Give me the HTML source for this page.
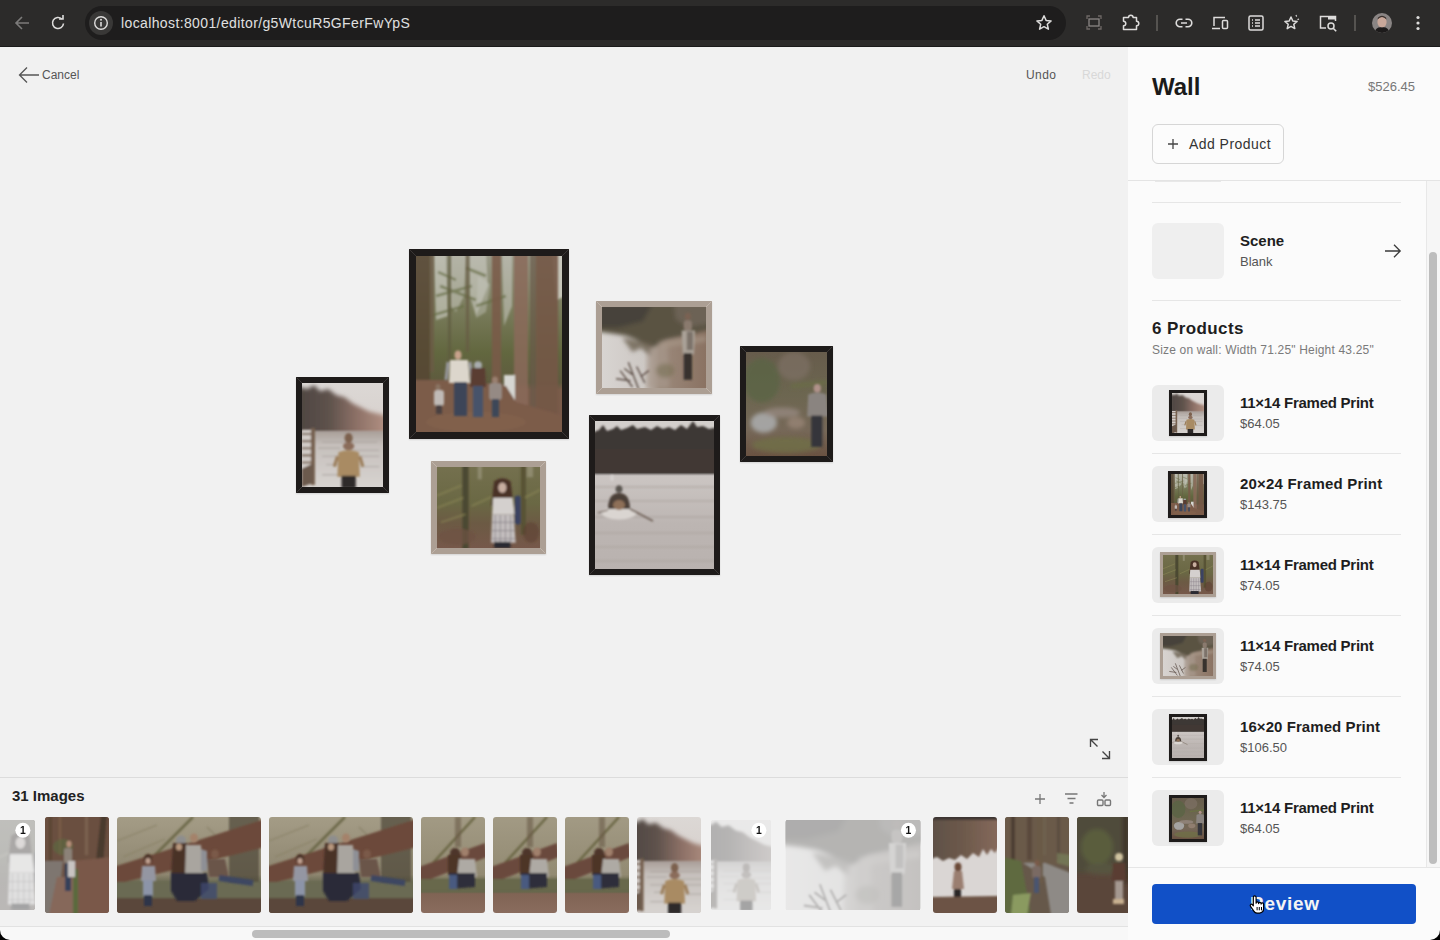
<!DOCTYPE html>
<html><head><meta charset="utf-8"><style>
*{box-sizing:border-box;margin:0;padding:0}
html,body{width:1440px;height:940px;overflow:hidden;background:#000}
body{position:relative;font-family:"Liberation Sans",sans-serif;}
.abs{position:absolute}
svg.abs{overflow:visible}
#tb{left:0;top:0;width:1440px;height:47px;background:#2c2b2a;border-bottom:1px solid #1b1b1b}
#url{left:85px;top:6px;width:981px;height:34px;border-radius:17px;background:#1e1d1d}
#urltxt{left:121px;top:16px;font-size:14px;color:#e0e0e0;letter-spacing:0.38px;white-space:nowrap}
#canvas{left:0;top:47px;width:1128px;height:730px;background:#f1f1f1}
#film{left:0;top:777px;width:1128px;height:163px;background:#f2f2f2;border-top:1px solid #dcdcdc;overflow:hidden}
#panel{left:1128px;top:47px;width:312px;height:893px;background:#fbfbfb}
.t{position:absolute;white-space:nowrap;line-height:1}
.frame{position:absolute;background:#1e1b1a;box-shadow:0 1px 1.5px rgba(0,0,0,.12)}
.frame.wood{background:#ac9f94}
.frame svg{position:absolute}
.th{position:absolute;top:39px;height:96px;border-radius:3px;overflow:hidden}
.th svg{position:absolute;left:0;top:0}
.fade{position:absolute;left:0;top:0;right:0;bottom:0;background:rgba(245,245,245,.6)}
.th.f svg{filter:grayscale(.75)}
.badge{position:absolute;top:3px;right:5px;width:16px;height:16px;border-radius:8px;background:#fff;font-size:11px;font-weight:bold;color:#111;text-align:center;line-height:16px}
.sep{position:absolute;left:1152px;width:249px;height:1px;background:#e6e6e6}
</style></head>
<body>
<svg width="0" height="0" style="position:absolute">
<defs>
<filter id="bl1" x="-20%" y="-20%" width="140%" height="140%"><feGaussianBlur stdDeviation="1"/></filter>
<filter id="bl2" x="-20%" y="-20%" width="140%" height="140%"><feGaussianBlur stdDeviation="2"/></filter>
<filter id="bl3" x="-20%" y="-20%" width="140%" height="140%"><feGaussianBlur stdDeviation="3"/></filter>

<!-- A: misty lake, kid on shoulders -->
<linearGradient id="gA1" x1="0" y1="0" x2="1" y2="0"><stop offset="0" stop-color="#4e4641"/><stop offset=".35" stop-color="#5e524c"/><stop offset=".65" stop-color="#8c7066"/><stop offset="1" stop-color="#b39284"/></linearGradient>
<linearGradient id="gA2" x1="0" y1="0" x2="0" y2="1"><stop offset="0" stop-color="#a89e98"/><stop offset=".25" stop-color="#c6c0bc"/><stop offset="1" stop-color="#d8d4d1"/></linearGradient>
<linearGradient id="gA3" x1="0" y1="0" x2="0" y2="1"><stop offset="0" stop-color="#dcd8d5"/><stop offset=".5" stop-color="#d6cfcb"/><stop offset="1" stop-color="#cbbdb6"/></linearGradient>
<symbol id="pA" viewBox="0 0 80 102" preserveAspectRatio="xMidYMid slice">
<rect width="80" height="102" fill="url(#gA3)"/>
<g filter="url(#bl2)">
<path d="M-4 4 L6 6 L12 2 L18 8 L26 6 L34 12 L42 14 L50 20 L58 24 L66 28 L74 30 L84 32 L84 50 L-4 50 Z" fill="url(#gA1)"/>
</g>
<g filter="url(#bl1)">
<rect x="-2" y="47" width="84" height="57" fill="url(#gA2)"/>
<path d="M20 58 h54 M16 64 h22 M44 66 h32 M20 72 h56 M24 80 h20 M58 82 h18 M20 90 h24" stroke="#a49d98" stroke-width="1.3" opacity=".6"/>
</g>
<g filter="url(#bl1)">
<rect x="0" y="46" width="12" height="50" fill="#d2ccc8"/>
<path d="M0 50h11M0 57h11M0 64h11M0 71h11M0 78h11" stroke="#7e6a5c" stroke-width="2"/>
<rect x="9" y="44" width="4" height="56" fill="#76614f"/>
<path d="M0 84 L11 79 L11 98 L0 102Z" fill="#6c5a4e"/>
</g>
<g filter="url(#bl1)">
<ellipse cx="46" cy="54" rx="4" ry="5" fill="#7c604e"/>
<ellipse cx="46" cy="62" rx="5.5" ry="4" fill="#8a6c5a"/>
<path d="M36 68 Q46 64 56 68 L57 92 L35 92 Z" fill="#a98b63"/>
<path d="M35 72 L32 82 M57 72 L60 82" stroke="#9a7c58" stroke-width="3"/>
<rect x="39" y="91" width="14" height="12" fill="#2e2a2a"/>
</g>
</symbol>

<!-- B: forest path family -->
<linearGradient id="gB1" x1="0" y1="0" x2="0" y2="1"><stop offset="0" stop-color="#9a9a88"/><stop offset=".3" stop-color="#7a7c5c"/><stop offset=".55" stop-color="#62673f"/><stop offset=".72" stop-color="#5e5a3e"/><stop offset=".76" stop-color="#7a5c4a"/><stop offset="1" stop-color="#7a5a4a"/></linearGradient>
<symbol id="pB" viewBox="0 0 146 176" preserveAspectRatio="xMidYMid slice">
<rect width="146" height="176" fill="url(#gB1)"/>
<g filter="url(#bl1)">
<path d="M18 -4 L30 -4 L32 60 L20 64Z" fill="#d2d2ca" opacity=".6"/>
<path d="M34 -4 L50 -4 L48 40 L40 56 L34 50Z" fill="#c8c8be" opacity=".55"/>
<path d="M54 -4 L70 -4 L72 30 L60 60 L54 40Z" fill="#cfcfc6" opacity=".6"/>
<path d="M62 20 L74 28 L70 56 L60 62Z" fill="#c4c6bb" opacity=".45"/>
<path d="M86 -4 L96 -4 L96 50 L88 70Z" fill="#cbcbc2" opacity=".55"/>
<path d="M136 -4 L150 -4 L150 40 L140 44Z" fill="#d6d4cc" opacity=".8"/>
<path d="M20 40 L56 30 M14 60 L48 50 M60 50 L90 40 M22 16 L40 24 M50 12 L70 20 M24 30 L60 44" stroke="#6a7048" stroke-width="3" opacity=".7"/>
</g>
<g filter="url(#bl1)">
<rect x="-4" y="-4" width="18" height="150" fill="#564434" opacity=".85"/>
<rect x="14" y="-4" width="4" height="120" fill="#6a5a44" opacity=".8"/>
<rect x="32" y="-4" width="3" height="110" fill="#5e5a40" opacity=".7"/>
<rect x="50" y="-4" width="3" height="100" fill="#665a44" opacity=".7"/>
<rect x="76" y="-4" width="9" height="150" fill="#7a5a48" opacity=".85"/>
<rect x="98" y="-4" width="14" height="176" fill="#8a6a5a" opacity=".85"/>
<rect x="114" y="-4" width="6" height="176" fill="#6a5848" opacity=".7"/>
<rect x="120" y="-4" width="22" height="180" fill="#735646" opacity=".9"/>
<rect x="88" y="119" width="11" height="26" fill="#d6d6d2"/>
<path d="M-4 124 L40 124 L90 130 L100 146 L150 160 L150 180 L-4 180Z" fill="#7b5b4a"/>
<ellipse cx="60" cy="166" rx="50" ry="10" fill="#86654f" opacity=".6"/>
</g>
<g filter="url(#bl1)">
<ellipse cx="42" cy="99" rx="3.5" ry="4.5" fill="#c8a28c"/>
<path d="M34 104 L52 104 L54 127 L33 127Z" fill="#dcd6cc"/>
<path d="M32 106 L30 124 M54 106 L56 124" stroke="#9a9aa0" stroke-width="3"/>
<rect x="38" y="126" width="13" height="34" fill="#3c4558"/>
<ellipse cx="62" cy="109" rx="4" ry="3.8" fill="#a8acae"/>
<path d="M55 112 L69 112 L70 131 L54 131Z" fill="#5a3e32"/>
<rect x="57" y="130" width="10" height="31" fill="#46536a"/>
<ellipse cx="79" cy="124" rx="3" ry="3.5" fill="#9a8070"/>
<rect x="73" y="127" width="13" height="17" rx="3" fill="#958a84"/>
<rect x="76" y="143" width="7" height="18" fill="#3e4658"/>
<ellipse cx="22" cy="131" rx="2.5" ry="3" fill="#8a7464"/>
<rect x="18" y="134" width="10" height="16" rx="3" fill="#c0bab6"/>
<rect x="20" y="149" width="6" height="9" fill="#4a4040"/>
</g>
</symbol>

<!-- C: lake shore, people on right -->
<linearGradient id="gC1" x1="0" y1="0" x2="1" y2="0"><stop offset="0" stop-color="#d8d4d1"/><stop offset=".4" stop-color="#cdc8c4"/><stop offset=".55" stop-color="#9c8a7c"/><stop offset="1" stop-color="#8a7262"/></linearGradient>
<symbol id="pC" viewBox="0 0 102 79" preserveAspectRatio="xMidYMid slice">
<rect width="102" height="79" fill="url(#gC1)"/>
<g filter="url(#bl2)">
<path d="M-4 -4 H106 V22 L80 28 L62 32 L50 40 L42 36 L34 32 L24 28 L12 26 L-4 24Z" fill="#5a5343"/>
<path d="M-4 -4 H50 L40 14 L16 20 L-4 20Z" fill="#46423a"/>
<path d="M70 -4 H106 V16 L84 20 L72 12Z" fill="#6c6254"/>
<path d="M20 30 L30 44 L38 40 L48 48 L50 36Z" fill="#6a6050" opacity=".8"/>
<path d="M46 40 L64 36 L66 79 L44 79Z" fill="#a89a8e" opacity=".6"/>
<ellipse cx="62" cy="62" rx="9" ry="7" fill="#756e50" opacity=".55"/>
<path d="M55 34 L102 28 L102 34 L58 40Z" fill="#a89888" opacity=".6"/>
</g>
<g filter="url(#bl1)">
<path d="M18 62 L30 78 M26 54 L36 80 M14 70 L28 72 M34 58 L42 74 M30 66 L22 60 M38 68 L46 62" stroke="#5e5048" stroke-width="1.4"/>
</g>
<g filter="url(#bl1)">
<ellipse cx="84" cy="9" rx="3" ry="3.5" fill="#7a6252"/>
<rect x="80" y="13" width="8" height="10" rx="3" fill="#8a7a6e"/>
<path d="M78 23 L91 23 L90 46 L79 46Z" fill="#aaa298"/>
<rect x="83" y="24" width="6" height="18" fill="#6a6058" opacity=".7"/>
<rect x="80" y="45" width="8" height="26" fill="#38322e"/>
</g>
</symbol>

<!-- D: girl in plaid dress, forest -->
<linearGradient id="gD1" x1="0" y1="0" x2="0" y2="1"><stop offset="0" stop-color="#74704e"/><stop offset=".45" stop-color="#6a6844"/><stop offset=".7" stop-color="#6c5a44"/><stop offset="1" stop-color="#76584a"/></linearGradient>
<symbol id="pD" viewBox="0 0 101 79" preserveAspectRatio="xMidYMid slice">
<rect width="101" height="79" fill="url(#gD1)"/>
<g filter="url(#bl1)">
<rect x="25" y="-4" width="6" height="86" fill="#4c4830"/>
<rect x="82" y="-4" width="5" height="70" fill="#585234"/>
<rect x="40" y="-4" width="4" height="16" fill="#aaa690" opacity=".5"/>
<rect x="88" y="-4" width="6" height="14" fill="#aaa690" opacity=".5"/>
<path d="M0 28 L24 18 M0 40 L26 30 M34 38 L56 28 M4 54 L28 46 M86 30 L101 22" stroke="#8a8656" stroke-width="2" opacity=".6"/>
<ellipse cx="20" cy="68" rx="18" ry="8" fill="#6e5244" opacity=".7"/>
<ellipse cx="92" cy="64" rx="8" ry="10" fill="#5e4034" opacity=".6"/>
</g>
<g filter="url(#bl1)">
<path d="M56 14 Q64 8 72 14 L75 38 L53 38Z" fill="#4a3026"/>
<ellipse cx="64" cy="20" rx="4" ry="5" fill="#c8aea0"/>
<path d="M55 30 L74 30 L76 46 L54 46Z" fill="#d4d0ce"/>
<path d="M54 46 L75 46 L77 74 L53 74Z" fill="#c4bfbf"/>
<path d="M57 47v26M62 47v26M67 47v26M72 47v26M54 54h22M54 62h22M54 70h22" stroke="#847e84" stroke-width=".8"/>
<rect x="76" y="28" width="6" height="28" rx="2" fill="#3a4262"/>
<rect x="56" y="73" width="16" height="6" fill="#2a2a30"/>
</g>
</symbol>

<!-- E: rowing boat on lake -->
<linearGradient id="gE1" x1="0" y1="0" x2="0" y2="1"><stop offset="0" stop-color="#ccc7c4"/><stop offset=".4" stop-color="#cac4c1"/><stop offset=".7" stop-color="#bcb5b2"/><stop offset="1" stop-color="#b9b2af"/></linearGradient>
<symbol id="pE" viewBox="0 0 119 148" preserveAspectRatio="xMidYMid slice">
<rect width="119" height="148" fill="url(#gE1)"/>
<rect width="119" height="12" fill="#d3cfcc"/>
<g filter="url(#bl1)">
<path d="M-4 12 L4 9 L8 4 L12 10 L18 8 L22 5 L26 9 L32 7 L38 4 L42 8 L50 6 L56 9 L62 5 L68 8 L74 6 L80 9 L86 4 L92 8 L98 0 L102 6 L108 5 L114 8 L123 6 L123 53 L-4 53Z" fill="#3e3834"/>
</g>
<rect x="0" y="28" width="119" height="24" fill="#433935" opacity=".7"/>
<g filter="url(#bl1)">
<path d="M-4 66h127M-4 80h127M-4 96h127M-4 112h127M-4 126h127M-4 140h127" stroke="#a9a29e" stroke-width="2" opacity=".5"/>
<ellipse cx="24" cy="92" rx="17" ry="6.5" fill="#dad5d1"/>
<ellipse cx="24" cy="68" rx="3.5" ry="3.8" fill="#5a5450"/>
<path d="M13 88 Q13 72 24 72 Q35 72 35 88Z" fill="#4c4038"/>
<ellipse cx="24" cy="84" rx="6" ry="5" fill="#8e7058"/>
<path d="M35 88 L58 100" stroke="#6a5a50" stroke-width="1.6"/>
<path d="M13 89 L3 92" stroke="#6a5a50" stroke-width="1.3"/>
<ellipse cx="17" cy="57" rx="1.5" ry="3" fill="#d8d4d2"/>
</g>
</symbol>

<!-- F: boy in forest -->
<linearGradient id="gF1" x1="0" y1="0" x2="0" y2="1"><stop offset="0" stop-color="#675c4c"/><stop offset=".4" stop-color="#6c6650"/><stop offset=".75" stop-color="#766858"/><stop offset="1" stop-color="#6a5242"/></linearGradient>
<symbol id="pF" viewBox="0 0 81 103" preserveAspectRatio="xMidYMid slice">
<rect width="81" height="103" fill="url(#gF1)"/>
<g filter="url(#bl2)">
<ellipse cx="16" cy="28" rx="18" ry="22" fill="#5a6444" opacity=".8"/>
<ellipse cx="48" cy="14" rx="16" ry="14" fill="#7e7064" opacity=".7"/>
<ellipse cx="18" cy="70" rx="13" ry="10" fill="#a8aaaa" opacity=".9"/>
<ellipse cx="36" cy="60" rx="18" ry="5" fill="#9a8c84" opacity=".7"/>
<ellipse cx="40" cy="92" rx="34" ry="8" fill="#707048" opacity=".8"/>
<ellipse cx="50" cy="70" rx="9" ry="6" fill="#a48e80" opacity=".6"/>
<path d="M45 34 L81 30" stroke="#6a7044" stroke-width="3"/>
</g>
<g filter="url(#bl1)">
<ellipse cx="71" cy="36" rx="3.6" ry="4.2" fill="#b0928a"/>
<path d="M62 42 Q71 38 80 42 L82 64 L61 64Z" fill="#8a8480"/>
<rect x="65" y="63" width="11" height="31" fill="#36363a"/>
</g>
</symbol>

<!-- G: family on log (wide) -->
<linearGradient id="gG1" x1="0" y1="0" x2="0" y2="1"><stop offset="0" stop-color="#a49c86"/><stop offset=".6" stop-color="#8e8670"/><stop offset=".68" stop-color="#6a6a52"/><stop offset=".84" stop-color="#626048"/><stop offset=".87" stop-color="#5a4a3e"/><stop offset="1" stop-color="#604c3e"/></linearGradient>
<symbol id="pG" viewBox="0 0 144 96" preserveAspectRatio="xMidYMid slice">
<rect width="144" height="96" fill="url(#gG1)"/>
<g filter="url(#bl1)">
<path d="M36 40 L76 0" stroke="#6a6848" stroke-width="2.5"/>
<path d="M0 24 L40 8 M6 40 L48 22 M90 10 L110 30" stroke="#8a8268" stroke-width="1.2"/>
<rect x="112" y="-4" width="30" height="72" fill="#4c4636" opacity=".7"/>
<path d="M-4 50 L148 2 L148 30 L-4 68Z" fill="#6c4a3a"/>
<rect x="-4" y="65" width="152" height="17" fill="#6a6a52"/>
<rect x="-4" y="81" width="152" height="19" fill="#5a463a"/>
</g>
<g filter="url(#bl1)">
<ellipse cx="31" cy="42" rx="4" ry="5" fill="#4a3228"/>
<ellipse cx="31" cy="44" rx="2.5" ry="3" fill="#c0a090"/>
<path d="M25 49 L38 49 L39 64 L24 64Z" fill="#9496a2"/>
<rect x="26" y="63" width="10" height="16" fill="#8c94a8"/>
<rect x="27" y="78" width="8" height="11" fill="#2e3648"/>
<ellipse cx="64" cy="23" rx="5" ry="4.5" fill="#8e8e8e"/>
<path d="M56 26 L70 26 L72 58 L54 58Z" fill="#4a3028"/>
<ellipse cx="62" cy="30" rx="3" ry="3.5" fill="#b8987e"/>
<ellipse cx="77" cy="21" rx="4" ry="4.5" fill="#a4826a"/>
<path d="M69 28 L84 28 L86 58 L68 58Z" fill="#a9a59f"/>
<path d="M84 32 L90 34 L90 54 L84 54Z" fill="#8e9096"/>
<path d="M54 56 L90 56 L92 72 L78 84 L60 84 L54 74Z" fill="#2c2c38"/>
<ellipse cx="98" cy="37" rx="4" ry="4.5" fill="#7a5a48"/>
<path d="M90 42 L108 42 L112 60 L92 60Z" fill="#6a5448"/>
<path d="M102 61 L136 66" stroke="#3e4662" stroke-width="6"/>
<rect x="84" y="66" width="16" height="16" fill="#404a6e" opacity=".8"/>
</g>
</symbol>

<!-- H: couple on log (portrait) -->
<linearGradient id="gH1" x1="0" y1="0" x2="0" y2="1"><stop offset="0" stop-color="#a29a84"/><stop offset=".6" stop-color="#928a72"/><stop offset=".68" stop-color="#6a6a50"/><stop offset=".78" stop-color="#66664c"/><stop offset=".8" stop-color="#806454"/><stop offset="1" stop-color="#8a6c5e"/></linearGradient>
<symbol id="pH" viewBox="0 0 64 96" preserveAspectRatio="xMidYMid slice">
<rect width="64" height="96" fill="url(#gH1)"/>
<g filter="url(#bl1)">
<path d="M12 46 L54 0" stroke="#6a6644" stroke-width="2.5"/>
<rect x="34" y="0" width="6" height="30" fill="#6a5a48" opacity=".6"/>
<path d="M-2 50 L64 26 L66 40 L10 62 L-2 62Z" fill="#6a4a3c"/>
<rect x="-2" y="62" width="68" height="12" fill="#67674c"/>
</g>
<g filter="url(#bl1)">
<ellipse cx="34" cy="36" rx="5" ry="5" fill="#4e362c"/>
<path d="M27 38 L40 38 L40 58 L27 58Z" fill="#4e3428"/>
<ellipse cx="44" cy="35" rx="4" ry="4.5" fill="#a0806c"/>
<path d="M38 42 L54 42 L56 60 L36 60Z" fill="#aeaaa4"/>
<path d="M28 56 L54 56 L54 70 L30 72Z" fill="#2e2e3a"/>
<rect x="28" y="58" width="8" height="14" fill="#4a5a80"/>
</g>
</symbol>

<!-- I: girl at lake reflection -->
<linearGradient id="gI1" x1="0" y1="0" x2="1" y2="0"><stop offset="0" stop-color="#5e5046"/><stop offset=".5" stop-color="#6e5a4c"/><stop offset="1" stop-color="#866a5c"/></linearGradient>
<symbol id="pI" viewBox="0 0 64 96" preserveAspectRatio="xMidYMid slice">
<rect width="64" height="96" fill="#dad6d4"/>
<g filter="url(#bl1)">
<path d="M-2 -2 H66 V30 L62 36 L58 32 L54 38 L50 32 L46 40 L40 36 L34 42 L28 38 L22 43 L16 41 L10 44 L4 40 L-2 42Z" fill="url(#gI1)"/>
<rect x="-2" y="-2" width="68" height="5" fill="#3e3430"/>
<path d="M-2 80 L66 79 L66 98 L-2 98Z" fill="#6c5244"/>
<ellipse cx="25" cy="50" rx="3.5" ry="4.5" fill="#6a4838"/>
<path d="M21 54 L29 54 L31 72 L19 72Z" fill="#9a7e70"/>
<rect x="21" y="72" width="7" height="8" fill="#2a2828"/>
</g>
</symbol>

<!-- J: forest path boy -->
<symbol id="pJ" viewBox="0 0 64 96" preserveAspectRatio="xMidYMid slice">
<rect width="64" height="96" fill="#66584a"/>
<g filter="url(#bl1)">
<rect x="-2" y="-2" width="68" height="50" fill="#6a5a4a"/>
<rect x="6" y="-2" width="4" height="50" fill="#4e3e32"/>
<rect x="22" y="-2" width="5" height="45" fill="#5a4a3c"/>
<rect x="38" y="-2" width="3" height="40" fill="#6e6250"/>
<rect x="52" y="-2" width="3" height="45" fill="#5a4e40"/>
<path d="M52 36 L66 38 L66 50 L52 46Z" fill="#78805a" opacity=".7"/>
<path d="M18 46 L40 46 L66 56 L66 98 L46 98 L40 60 Z" fill="#8e8a86"/>
<path d="M-2 40 L16 44 L26 98 L-2 98Z" fill="#5e6a40"/>
<path d="M8 78 L26 76 L22 98 L6 98Z" fill="#8a9a60"/>
<rect x="32" y="0" width="6" height="66" fill="#6a5a46"/>
<ellipse cx="32" cy="46" rx="2.5" ry="3" fill="#7a5a48"/>
<rect x="27" y="49" width="9" height="12" rx="2" fill="#7a6a64"/>
<rect x="29" y="60" width="5" height="16" fill="#4a5470"/>
</g>
</symbol>

<!-- K: kid in forest -->
<symbol id="pK" viewBox="0 0 64 96" preserveAspectRatio="xMidYMid slice">
<rect width="64" height="96" fill="#5a463a"/>
<g filter="url(#bl2)">
<rect x="-4" y="-4" width="72" height="60" fill="#504c3a"/>
<ellipse cx="20" cy="30" rx="16" ry="18" fill="#5c6240" opacity=".8"/>
<ellipse cx="26" cy="52" rx="18" ry="6" fill="#5a5a44" opacity=".7"/>
<rect x="46" y="-4" width="5" height="70" fill="#3e3228"/>
<rect x="58" y="-4" width="5" height="70" fill="#4a3a2e"/>
</g>
<g filter="url(#bl1)">
<ellipse cx="42" cy="40" rx="4" ry="4" fill="#d0c4a0"/>
<path d="M36 46 L48 46 L49 64 L35 64Z" fill="#5a3c30"/>
<rect x="38" y="64" width="8" height="18" fill="#a49890"/>
<rect x="36" y="82" width="11" height="5" fill="#c8b090"/>
</g>
</symbol>

<!-- L: man with child boardwalk -->
<symbol id="pL" viewBox="0 0 64 96" preserveAspectRatio="xMidYMid slice">
<rect width="64" height="96" fill="#6c5244"/>
<g filter="url(#bl1)">
<rect x="-2" y="-2" width="68" height="48" fill="#6a5040"/>
<rect x="4" y="-2" width="3" height="46" fill="#5a4432"/>
<rect x="14" y="-2" width="2" height="40" fill="#7a5e4a"/>
<rect x="40" y="-2" width="3" height="40" fill="#7a6250"/>
<ellipse cx="18" cy="30" rx="10" ry="8" fill="#5a6a40" opacity=".6"/>
<path d="M56 -2 L62 -2 L58 50 L50 52Z" fill="#4a3a2e"/>
<path d="M-2 44 L18 44 L12 98 L-2 98Z" fill="#7e7670"/>
<path d="M12 60 L28 60 L28 98 L4 98Z" fill="#86685a"/>
<path d="M28 44 L66 40 L66 98 L28 98Z" fill="#7a5848"/>
<rect x="28" y="52" width="5" height="46" fill="#5a6a3c"/>
<ellipse cx="24" cy="27" rx="2.5" ry="3.2" fill="#b8907a"/>
<rect x="19" y="31" width="8" height="16" rx="2" fill="#8c8278"/>
<rect x="20" y="46" width="6" height="28" fill="#34405a"/>
<rect x="23" y="44" width="7" height="16" fill="#c8c4c2"/>
</g>
</symbol>
</defs>
</svg>
<div id="tb" class="abs"></div><div id="url" class="abs"></div>
<div class="t" id="urltxt">localhost:8001/editor/g5WtcuR5GFerFwYpS</div>
<svg class="abs" style="left:13px;top:14px" width="18" height="18" viewBox="0 0 18 18"><path d="M16 9H3M9 3L3 9l6 6" fill="none" stroke="#7c7b7a" stroke-width="1.6"/></svg>
<svg class="abs" style="left:49px;top:14px" width="18" height="18" viewBox="0 0 18 18"><path d="M14.5 9.5A5.5 5.5 0 1 1 12.8 5" fill="none" stroke="#dddcdb" stroke-width="1.6"/><path d="M10 5h4V1" fill="none" stroke="#dddcdb" stroke-width="1.6"/></svg>
<div class="abs" style="left:89px;top:11px;width:24px;height:24px;border-radius:12px;background:#393837"></div>
<svg class="abs" style="left:93px;top:15px" width="16" height="16" viewBox="0 0 16 16"><circle cx="8" cy="8" r="6.3" fill="none" stroke="#dddcdb" stroke-width="1.4"/><path d="M8 7v4.5" stroke="#dddcdb" stroke-width="1.6"/><circle cx="8" cy="4.8" r="1" fill="#dddcdb"/></svg>
<svg class="abs" style="left:1035px;top:14px" width="18" height="18" viewBox="0 0 18 18"><path d="M9 1.8l2.1 4.6 5 .5-3.8 3.4 1.1 4.9L9 12.7l-4.4 2.5 1.1-4.9L1.9 6.9l5-.5z" fill="none" stroke="#dddcdb" stroke-width="1.5" stroke-linejoin="round"/></svg>
<svg class="abs" style="left:1086px;top:15px" width="16" height="15" viewBox="0 0 16 15"><path d="M1 4V1h3M12 1h3v3M15 11v3h-3M4 14H1v-3" fill="none" stroke="#6e6866" stroke-width="1.3"/><rect x="3" y="4" width="10" height="7" fill="none" stroke="#8a8684" stroke-width="1.3"/></svg>
<svg class="abs" style="left:1122px;top:14px" width="18" height="17" viewBox="0 0 18 17"><path d="M1.5 3.5H6.5a2.3 2.3 0 0 1 4.6 0H14.5V7.2a2.3 2.3 0 0 1 0 4.6V15.5H1.5V11.8a2.3 2.3 0 0 0 0-4.6Z" fill="none" stroke="#dddcdb" stroke-width="1.5" stroke-linejoin="round"/></svg>
<div class="abs" style="left:1156px;top:15px;width:2px;height:16px;background:#555350"></div>
<svg class="abs" style="left:1175px;top:18px" width="18" height="10" viewBox="0 0 18 10"><path d="M7.5 1.2H5a3.8 3.8 0 0 0 0 7.6h2.5M10.5 1.2H13a3.8 3.8 0 0 1 0 7.6h-2.5M6 5h6" fill="none" stroke="#dddcdb" stroke-width="1.6"/></svg>
<svg class="abs" style="left:1211px;top:16px" width="18" height="14" viewBox="0 0 18 14"><path d="M3 10V1.5h11M1 12.5h8" fill="none" stroke="#dddcdb" stroke-width="1.5"/><rect x="11.5" y="4.5" width="5" height="8" rx="1" fill="none" stroke="#dddcdb" stroke-width="1.5"/></svg>
<svg class="abs" style="left:1248px;top:15px" width="16" height="16" viewBox="0 0 16 16"><rect x="1" y="1" width="14" height="14" rx="1.5" fill="none" stroke="#dddcdb" stroke-width="1.5"/><path d="M4 5h1M7 5h5M4 8h1M7 8h5M4 11h1M7 11h5" stroke="#dddcdb" stroke-width="1.5"/></svg>
<svg class="abs" style="left:1283px;top:14px" width="18" height="17" viewBox="0 0 18 17"><path d="M8 3l1.8 4 4.3.4-3.3 2.9 1 4.3L8 12.4l-3.8 2.2 1-4.3L1.9 7.4l4.3-.4z" fill="none" stroke="#dddcdb" stroke-width="1.5" stroke-linejoin="round"/><path d="M13 1l.6 1.6M16 5l-1.5.6" stroke="#dddcdb" stroke-width="1.2"/></svg>
<svg class="abs" style="left:1319px;top:15px" width="19" height="17" viewBox="0 0 19 17"><path d="M7 13H1.5V1.5h15V6" fill="none" stroke="#dddcdb" stroke-width="1.5"/><rect x="9" y="1.5" width="7.5" height="3" fill="#dddcdb"/><circle cx="12" cy="11" r="3" fill="none" stroke="#dddcdb" stroke-width="1.5"/><path d="M14.2 13.2l3 3" stroke="#dddcdb" stroke-width="1.6"/></svg>
<div class="abs" style="left:1354px;top:15px;width:2px;height:16px;background:#555350"></div>
<svg class="abs" style="left:1372px;top:13px" width="20" height="20" viewBox="0 0 20 20"><defs><clipPath id="av"><circle cx="10" cy="10" r="10"/></clipPath></defs><g clip-path="url(#av)"><rect width="20" height="20" fill="#8a8584"/><ellipse cx="10" cy="9" rx="4.6" ry="5.5" fill="#c9a89a"/><path d="M5.5 6.5Q10 1.5 14.5 6.5L14 4.5Q10 1 6 4.5z" fill="#3a302c"/><path d="M2 20Q4 13.5 10 14.5Q16 13.5 18 20z" fill="#1c1a1a"/></g></svg>
<svg class="abs" style="left:1415px;top:15px" width="6" height="16" viewBox="0 0 6 16"><circle cx="3" cy="2.5" r="1.6" fill="#dddcdb"/><circle cx="3" cy="8" r="1.6" fill="#dddcdb"/><circle cx="3" cy="13.5" r="1.6" fill="#dddcdb"/></svg>
<div id="canvas" class="abs"></div>
<svg class="abs" style="left:18px;top:66px" width="22" height="18" viewBox="0 0 22 18"><path d="M21 9H2M9 1.5L1.5 9 9 16.5" fill="none" stroke="#555" stroke-width="1.3"/></svg>
<div class="t" style="left:42px;top:69px;font-size:12px;color:#555">Cancel</div>
<div class="t" style="left:1026px;top:69px;font-size:12px;color:#555;letter-spacing:.4px">Undo</div>
<div class="t" style="left:1082px;top:69px;font-size:12px;color:#d8d8d8">Redo</div>
<div class="frame" style="left:296px;top:377px;width:93px;height:116px"><svg width="93" height="116" style="left:0;top:0"><path d="M0.5 0.5L6 6M92.5 0.5L87 6M0.5 115.5L6 110M92.5 115.5L87 110" stroke="#3a3635" stroke-width="1"/></svg><svg width="81" height="104" style="left:6px;top:6px"><use href="#pA" width="81" height="104"/></svg></div>
<div class="frame" style="left:409px;top:249px;width:160px;height:190px"><svg width="160" height="190" style="left:0;top:0"><path d="M0.5 0.5L7 7M159.5 0.5L153 7M0.5 189.5L7 183M159.5 189.5L153 183" stroke="#3a3635" stroke-width="1"/></svg><svg width="146" height="176" style="left:7px;top:7px"><use href="#pB" width="146" height="176"/></svg></div>
<div class="frame wood" style="left:596px;top:301px;width:116px;height:93px"><svg width="116" height="93" style="left:0;top:0"><path d="M0.5 0.5L6 6M115.5 0.5L110 6M0.5 92.5L6 87M115.5 92.5L110 87" stroke="#c0b4aa" stroke-width="1"/></svg><svg width="104" height="81" style="left:6px;top:6px"><use href="#pC" width="104" height="81"/></svg></div>
<div class="frame wood" style="left:431px;top:461px;width:115px;height:93px"><svg width="115" height="93" style="left:0;top:0"><path d="M0.5 0.5L6 6M114.5 0.5L109 6M0.5 92.5L6 87M114.5 92.5L109 87" stroke="#c0b4aa" stroke-width="1"/></svg><svg width="103" height="81" style="left:6px;top:6px"><use href="#pD" width="103" height="81"/></svg></div>
<div class="frame" style="left:589px;top:415px;width:131px;height:160px"><svg width="131" height="160" style="left:0;top:0"><path d="M0.5 0.5L6 6M130.5 0.5L125 6M0.5 159.5L6 154M130.5 159.5L125 154" stroke="#3a3635" stroke-width="1"/></svg><svg width="119" height="148" style="left:6px;top:6px"><use href="#pE" width="119" height="148"/></svg></div>
<div class="frame" style="left:740px;top:346px;width:93px;height:116px"><svg width="93" height="116" style="left:0;top:0"><path d="M0.5 0.5L6 6M92.5 0.5L87 6M0.5 115.5L6 110M92.5 115.5L87 110" stroke="#3a3635" stroke-width="1"/></svg><svg width="81" height="104" style="left:6px;top:6px"><use href="#pF" width="81" height="104"/></svg></div>
<svg class="abs" style="left:1088px;top:737px" width="24" height="24" viewBox="0 0 24 24"><path d="M2.5 10V2.5H10M2.5 2.5L9.5 9.5M21.5 14v7.5H14M21.5 21.5L14.5 14.5" fill="none" stroke="#444" stroke-width="1.35"/></svg>
<div id="film" class="abs">
<div class="t" style="left:12px;top:10px;font-size:15px;font-weight:bold;color:#222">31 Images</div>
<div class="th f" style="left:-27px;width:64px;transform:scale(.94);"><svg width="64" height="96" style="left:0;top:0"><use href="#pD" width="64" height="96"/></svg><div class="fade"></div><div class="badge">1</div></div>
<div class="th" style="left:45px;width:64px;"><svg width="64" height="96" style="left:0;top:0"><use href="#pL" width="64" height="96"/></svg></div>
<div class="th" style="left:117px;width:144px;"><svg width="144" height="96" style="left:0;top:0"><use href="#pG" width="144" height="96"/></svg></div>
<div class="th" style="left:269px;width:144px;"><svg width="144" height="96" style="left:0;top:0"><use href="#pG" width="144" height="96"/></svg></div>
<div class="th" style="left:421px;width:64px;"><svg width="64" height="96" style="left:0;top:0"><use href="#pH" width="64" height="96"/></svg></div>
<div class="th" style="left:493px;width:64px;"><svg width="64" height="96" style="left:0;top:0"><use href="#pH" width="64" height="96"/></svg></div>
<div class="th" style="left:565px;width:64px;"><svg width="64" height="96" style="left:0;top:0"><use href="#pH" width="64" height="96"/></svg></div>
<div class="th" style="left:637px;width:64px;"><svg width="64" height="96" style="left:0;top:0"><use href="#pA" width="64" height="96"/></svg></div>
<div class="th f" style="left:709px;width:64px;transform:scale(.94);"><svg width="64" height="96" style="left:0;top:0"><use href="#pA" width="64" height="96"/></svg><div class="fade"></div><div class="badge">1</div></div>
<div class="th f" style="left:781px;width:144px;transform:scale(.94);"><svg width="144" height="96" style="left:0;top:0"><use href="#pC" width="144" height="96"/></svg><div class="fade"></div><div class="badge">1</div></div>
<div class="th" style="left:933px;width:64px;"><svg width="64" height="96" style="left:0;top:0"><use href="#pI" width="64" height="96"/></svg></div>
<div class="th" style="left:1005px;width:64px;"><svg width="64" height="96" style="left:0;top:0"><use href="#pJ" width="64" height="96"/></svg></div>
<div class="th" style="left:1077px;width:64px;"><svg width="64" height="96" style="left:0;top:0"><use href="#pK" width="64" height="96"/></svg></div>
<svg class="abs" style="left:1033px;top:14px" width="14" height="14" viewBox="0 0 14 14"><path d="M7 2v10M2 7h10" stroke="#777" stroke-width="1.3"/></svg>
<svg class="abs" style="left:1064px;top:14px" width="14" height="12" viewBox="0 0 14 12"><path d="M1 2h12.5M3.5 6.5h8M5.5 11h4" stroke="#777" stroke-width="1.4"/></svg>
<svg class="abs" style="left:1096px;top:13px" width="16" height="16" viewBox="0 0 16 16"><path d="M8 1v5M5.5 4L8 6.5 10.5 4" fill="none" stroke="#777" stroke-width="1.3"/><rect x="1.5" y="9" width="5.5" height="5.5" rx="1" fill="none" stroke="#777" stroke-width="1.4"/><rect x="9" y="9" width="5.5" height="5.5" rx="1" fill="none" stroke="#777" stroke-width="1.4"/></svg>
<div class="abs" style="left:0;top:148px;width:1128px;height:15px;background:#f8f8f8;border-top:1px solid #e2e2e2"></div>
<div class="abs" style="left:252px;top:152px;width:418px;height:8px;border-radius:4px;background:#bcbcbc"></div>
</div>
<div id="panel" class="abs"></div>
<div class="t" style="left:1152px;top:75px;font-size:24px;font-weight:bold;color:#1a1a1a">Wall</div>
<div class="t" style="left:1368px;top:80px;font-size:13px;color:#777">$526.45</div>
<div class="abs" style="left:1152px;top:124px;width:132px;height:40px;border:1px solid #d6d6d6;border-radius:6px;background:#fcfcfc"></div>
<svg class="abs" style="left:1166px;top:137px" width="14" height="14" viewBox="0 0 14 14"><path d="M7 2v10M2 7h10" stroke="#444" stroke-width="1.3"/></svg>
<div class="t" style="left:1189px;top:137px;font-size:14px;color:#333;letter-spacing:.45px">Add Product</div>
<div class="abs" style="left:1128px;top:180px;width:312px;height:1px;background:#e4e4e4"></div>
<div class="abs" style="left:1155px;top:181px;width:66px;height:1px;background:#e8e8e8"></div>
<div class="sep" style="top:202px"></div>
<div class="abs" style="left:1152px;top:223px;width:72px;height:56px;background:#efefef;border-radius:6px"></div>
<div class="t" style="left:1240px;top:233px;font-size:15px;font-weight:bold;color:#1e1e1e">Scene</div>
<div class="t" style="left:1240px;top:255px;font-size:13px;color:#555">Blank</div>
<svg class="abs" style="left:1383px;top:242px" width="20" height="18" viewBox="0 0 20 18"><path d="M2 9h15.5M11 2.8l6.2 6.2-6.2 6.2" fill="none" stroke="#3a3a3a" stroke-width="1.3"/></svg>
<div class="sep" style="top:300px"></div>
<div class="t" style="left:1152px;top:320px;font-size:17px;font-weight:bold;color:#1e1e1e;letter-spacing:.4px">6 Products</div>
<div class="t" style="left:1152px;top:344px;font-size:12px;color:#7a7a7a;letter-spacing:.18px">Size on wall: Width 71.25" Height 43.25"</div>
<div class="abs" style="left:1152px;top:385px;width:72px;height:56px;background:#ebebeb;border-radius:6px"></div>
<div class="t" style="left:1240px;top:395px;font-size:15px;font-weight:bold;color:#1e1e1e;letter-spacing:-.25px">11×14 Framed Print</div>
<div class="t" style="left:1240px;top:417px;font-size:13px;color:#555">$64.05</div>
<div class="sep" style="top:453px"></div>
<div class="abs" style="left:1152px;top:466px;width:72px;height:56px;background:#ebebeb;border-radius:6px"></div>
<div class="t" style="left:1240px;top:476px;font-size:15px;font-weight:bold;color:#1e1e1e;letter-spacing:.2px">20×24 Framed Print</div>
<div class="t" style="left:1240px;top:498px;font-size:13px;color:#555">$143.75</div>
<div class="sep" style="top:534px"></div>
<div class="abs" style="left:1152px;top:547px;width:72px;height:56px;background:#ebebeb;border-radius:6px"></div>
<div class="t" style="left:1240px;top:557px;font-size:15px;font-weight:bold;color:#1e1e1e;letter-spacing:-.25px">11×14 Framed Print</div>
<div class="t" style="left:1240px;top:579px;font-size:13px;color:#555">$74.05</div>
<div class="sep" style="top:615px"></div>
<div class="abs" style="left:1152px;top:628px;width:72px;height:56px;background:#ebebeb;border-radius:6px"></div>
<div class="t" style="left:1240px;top:638px;font-size:15px;font-weight:bold;color:#1e1e1e;letter-spacing:-.25px">11×14 Framed Print</div>
<div class="t" style="left:1240px;top:660px;font-size:13px;color:#555">$74.05</div>
<div class="sep" style="top:696px"></div>
<div class="abs" style="left:1152px;top:709px;width:72px;height:56px;background:#ebebeb;border-radius:6px"></div>
<div class="t" style="left:1240px;top:719px;font-size:15px;font-weight:bold;color:#1e1e1e;letter-spacing:.07px">16×20 Framed Print</div>
<div class="t" style="left:1240px;top:741px;font-size:13px;color:#555">$106.50</div>
<div class="sep" style="top:777px"></div>
<div class="abs" style="left:1152px;top:790px;width:72px;height:56px;background:#ebebeb;border-radius:6px"></div>
<div class="t" style="left:1240px;top:800px;font-size:15px;font-weight:bold;color:#1e1e1e;letter-spacing:-.25px">11×14 Framed Print</div>
<div class="t" style="left:1240px;top:822px;font-size:13px;color:#555">$64.05</div>

<div class="abs" style="left:1426px;top:181px;width:14px;height:686px;background:#f6f6f6;border-left:1px solid #e8e8e8"></div>
<div class="abs" style="left:1429px;top:252px;width:8px;height:612px;background:#bdbdbd;border-radius:4px"></div>
<div class="abs" style="left:1128px;top:867px;width:312px;height:1px;background:#e6e6e6"></div>
<div class="abs" style="left:1152px;top:884px;width:264px;height:40px;background:#1150c7;border-radius:4px"></div>
<div class="t" style="left:1250px;top:894px;font-size:19px;font-weight:bold;color:#f4f4f4;letter-spacing:.7px">Review</div>
<div class="frame" style="left:1169px;top:390px;width:38px;height:46px"><svg width="32" height="40" style="left:3px;top:3px"><use href="#pA" width="32" height="40"/></svg></div>
<div class="frame" style="left:1168px;top:471px;width:39px;height:47px"><svg width="33" height="41" style="left:3px;top:3px"><use href="#pB" width="33" height="41"/></svg></div>
<div class="frame wood" style="left:1160px;top:552px;width:56px;height:45px"><svg width="50" height="39" style="left:3px;top:3px"><use href="#pD" width="50" height="39"/></svg></div>
<div class="frame wood" style="left:1160px;top:633px;width:56px;height:46px"><svg width="50" height="40" style="left:3px;top:3px"><use href="#pC" width="50" height="40"/></svg></div>
<div class="frame" style="left:1169px;top:714px;width:38px;height:47px"><svg width="32" height="41" style="left:3px;top:3px"><use href="#pE" width="32" height="41"/></svg></div>
<div class="frame" style="left:1169px;top:795px;width:38px;height:47px"><svg width="32" height="41" style="left:3px;top:3px"><use href="#pF" width="32" height="41"/></svg></div>
<svg class="abs" style="left:1249px;top:895px" width="17" height="19" viewBox="0 0 17 19"><path d="M4.3 2.3a1.4 1.4 0 0 1 2.8 0V8.2a1.25 1.25 0 0 1 2.5 0v.4a1.25 1.25 0 0 1 2.5 0v.5a1.25 1.25 0 0 1 2.5 0V13.5q0 4-4 4.6H8q-2 0-3.2-2L1.5 11.3a1.25 1.25 0 0 1 2-1.5l.8 1Z" fill="#fff" stroke="#000" stroke-width="1.2" stroke-linejoin="round"/><path d="M8.1 12v3.3M10.3 12v3.3M12.5 12v3.3" stroke="#000" stroke-width="1"/></svg>
<svg class="abs" style="left:0;top:930px" width="10" height="10"><path d="M0 0V10H10A10 10 0 0 1 0 0z" fill="#000"/></svg><svg class="abs" style="left:1430px;top:930px" width="10" height="10"><path d="M10 0V10H0A10 10 0 0 0 10 0z" fill="#000"/></svg>

</body></html>
